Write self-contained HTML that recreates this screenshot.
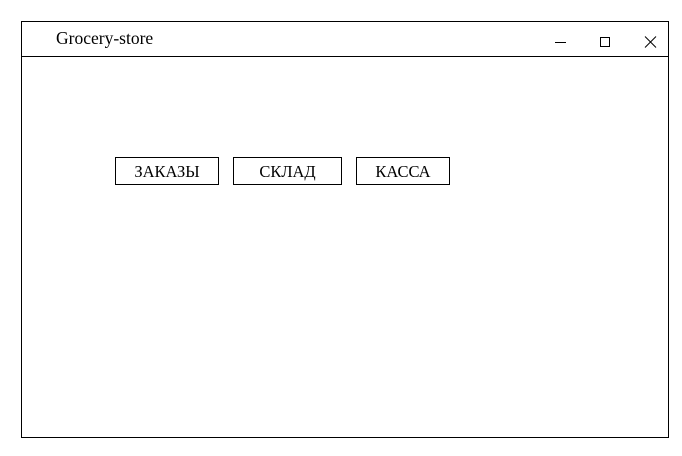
<!DOCTYPE html>
<html><head><style>
body{margin:0;width:682px;height:456px;background:#fff;position:relative;font-family:"Liberation Serif",serif;overflow:hidden}
.win{position:absolute;left:21px;top:21px;width:646px;height:415px;border:1px solid #000}
.bar{position:absolute;left:21px;top:56px;width:648px;height:1px;background:#000}
.t{position:absolute;left:56px;top:28px;font-size:17.5px}
.b{position:absolute;top:157px;border:1px solid #000;box-sizing:border-box;height:28px;font-size:16.5px;text-align:center;line-height:27px}
</style></head><body>
<div class="win"></div><div class="bar"></div>
<div class="t">Grocery-store</div>
<svg style="position:absolute;left:0;top:0" width="682" height="456">
<line x1="555" y1="42.5" x2="566" y2="42.5" stroke="#000"/>
<rect x="600.5" y="37.5" width="9" height="9" fill="none" stroke="#000"/>
<path d="M645 36.5L656 47.5M656 36.5L645 47.5" stroke="#000"/>
</svg>
<div class="b" style="left:115px;width:104px">ЗАКАЗЫ</div>
<div class="b" style="left:233px;width:109px">СКЛАД</div>
<div class="b" style="left:356px;width:94px">КАССА</div>
</body></html>
